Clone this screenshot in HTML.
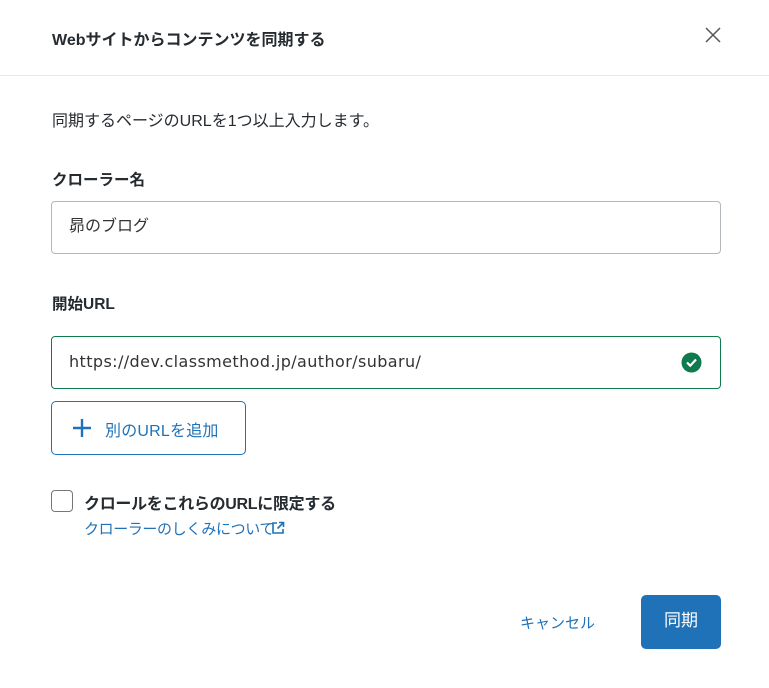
<!DOCTYPE html>
<html><head><meta charset="utf-8"><style>
*{box-sizing:border-box;margin:0;padding:0}
body{width:769px;height:688px;background:#fff;font-family:"Liberation Sans","Noto Sans CJK JP",sans-serif;color:#262b30;position:relative;overflow:hidden}
.a{position:absolute;white-space:nowrap}
.hdr{left:0;top:0;width:769px;height:76px;border-bottom:1px solid #e6e8ea}
.t{font-size:16px;font-weight:bold}
.inp{border:1px solid #b3b8bd;border-radius:4px;height:53px;left:51px;width:670px;font-size:16px;padding:0 17px;line-height:51px;color:#333}
.lbl{font-size:15.5px;font-weight:bold}
</style></head><body>
<div class="a hdr"></div>
<div class="a t" style="left:52px;top:26px">Webサイトからコンテンツを同期する</div>
<svg class="a" style="left:705px;top:27px" width="16" height="16"><path d="M1 1L15 15M15 1L1 15" stroke="#555" stroke-width="1.5"/></svg>
<div class="a" style="left:52px;top:107px;font-size:16px">同期するページのURLを1つ以上入力します。</div>
<div class="a lbl" style="left:52px;top:168px">クローラー名</div>
<div class="a inp" style="top:201px;line-height:50px">昴のブログ</div>
<div class="a lbl" style="left:52px;top:292px">開始URL</div>
<div class="a inp" style="top:336px;border-color:#0e7a4e;font-family:'DejaVu Sans','Noto Sans CJK JP',sans-serif;letter-spacing:0.4px;line-height:50px">https://dev.classmethod.jp/author/subaru/</div>
<svg class="a" style="left:681px;top:352px" width="21" height="21"><circle cx="10.5" cy="10.5" r="10" fill="#0e7a4e"/><path d="M6 10.5l3.2 3.2L15 7.5" stroke="#fff" stroke-width="2.2" fill="none"/></svg>
<div class="a" style="left:51px;top:401px;width:195px;height:54px;border:1px solid #1f72b8;border-radius:5px"></div>
<svg class="a" style="left:72px;top:418px" width="20" height="20"><path d="M10 1v18M1 10h18" stroke="#1f72b8" stroke-width="2.4"/></svg>
<div class="a" style="left:105px;top:417px;font-size:16px;color:#1f72b8;letter-spacing:0.2px">別のURLを追加</div>
<div class="a" style="left:51px;top:490px;width:22px;height:22px;border:1.5px solid #777;border-radius:4px"></div>
<div class="a lbl" style="left:84px;top:490px;font-size:16px;letter-spacing:-0.3px">クロールをこれらのURLに限定する</div>
<div class="a" style="left:84px;top:518px;font-size:15px;color:#1f72b8;letter-spacing:-0.4px">クローラーのしくみについて</div>
<svg class="a" style="left:271px;top:521px" width="14" height="14"><path d="M6 2H2v10h10V8M8 1.5h4.5V6M12.5 1.5L6.5 7.5" stroke="#1f72b8" stroke-width="1.6" fill="none"/></svg>
<div class="a" style="left:520px;top:612px;font-size:15px;color:#1f72b8">キャンセル</div>
<div class="a" style="left:641px;top:595px;width:80px;height:54px;background:#1f72b8;border-radius:5px;color:#fff;font-size:17px;text-align:center;line-height:52px">同期</div>
</body></html>
